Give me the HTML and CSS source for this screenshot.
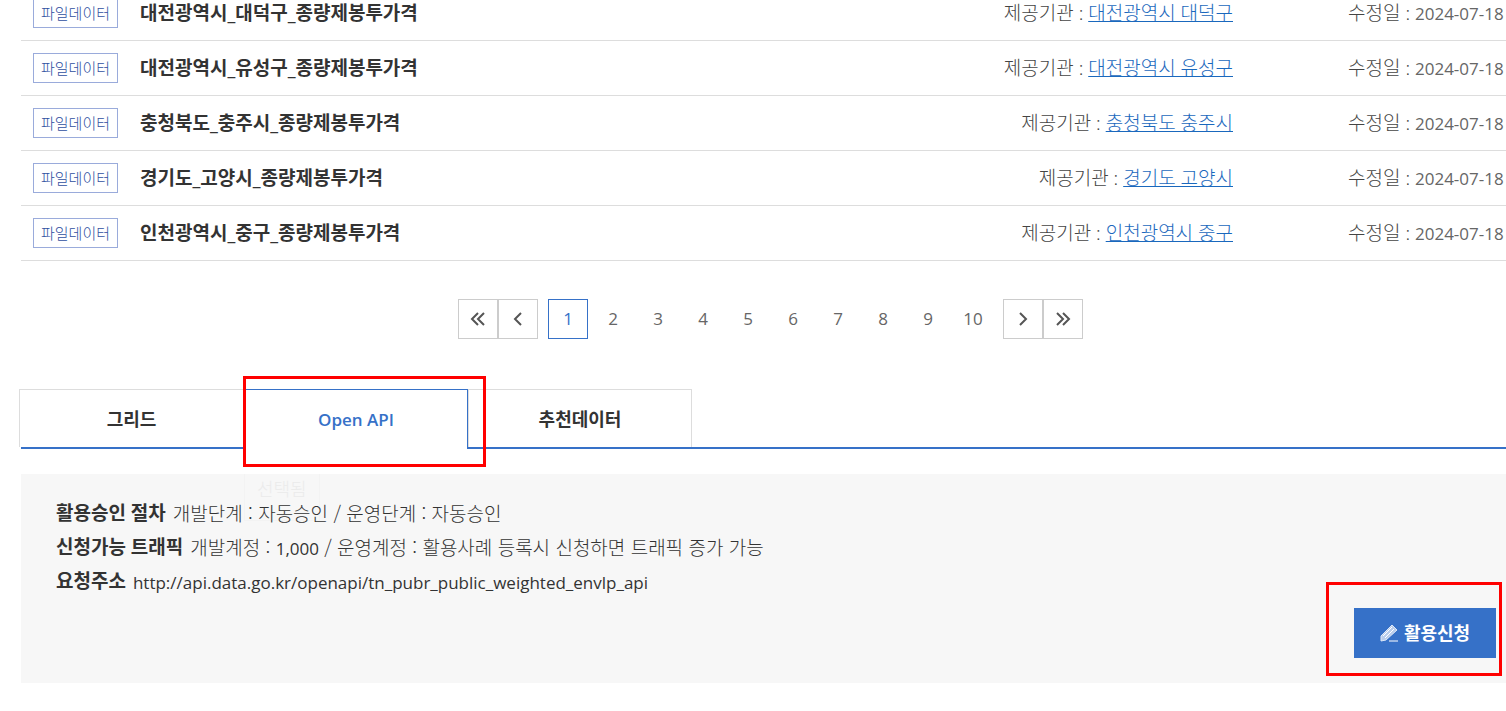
FILE: index.html
```html
<!DOCTYPE html>
<html lang="ko">
<head>
<meta charset="utf-8">
<title>공공데이터 목록</title>
<link rel="stylesheet" href="styles.css">
</head>
<body>
<main class="page">
  <ul class="list">
    <li class="row"><span class="badge">파일데이터</span><strong class="title">대전광역시_대덕구_종량제봉투가격</strong><span class="org">제공기관 : <a href="#">대전광역시 대덕구</a></span><span class="date">수정일 : <time class="latin">2024-07-18</time></span></li>
    <li class="row"><span class="badge">파일데이터</span><strong class="title">대전광역시_유성구_종량제봉투가격</strong><span class="org">제공기관 : <a href="#">대전광역시 유성구</a></span><span class="date">수정일 : <time class="latin">2024-07-18</time></span></li>
    <li class="row"><span class="badge">파일데이터</span><strong class="title">충청북도_충주시_종량제봉투가격</strong><span class="org">제공기관 : <a href="#">충청북도 충주시</a></span><span class="date">수정일 : <time class="latin">2024-07-18</time></span></li>
    <li class="row"><span class="badge">파일데이터</span><strong class="title">경기도_고양시_종량제봉투가격</strong><span class="org">제공기관 : <a href="#">경기도 고양시</a></span><span class="date">수정일 : <time class="latin">2024-07-18</time></span></li>
    <li class="row"><span class="badge">파일데이터</span><strong class="title">인천광역시_중구_종량제봉투가격</strong><span class="org">제공기관 : <a href="#">인천광역시 중구</a></span><span class="date">수정일 : <time class="latin">2024-07-18</time></span></li>
  </ul>

  <nav class="pager" aria-label="페이지">
    <div class="steps">
      <button class="step" type="button" aria-label="처음"><svg width="16" height="16" viewBox="0 0 16 16"><path d="M8 2 2 8l6 6M14 2 8 8l6 6"/></svg></button>
      <button class="step" type="button" aria-label="이전"><svg width="16" height="16" viewBox="0 0 16 16"><path d="M11 2 5 8l6 6"/></svg></button>
    </div>
    <div class="numbers">
      <a class="num current" href="#" aria-current="page">1</a>
      <a class="num" href="#">2</a>
      <a class="num" href="#">3</a>
      <a class="num" href="#">4</a>
      <a class="num" href="#">5</a>
      <a class="num" href="#">6</a>
      <a class="num" href="#">7</a>
      <a class="num" href="#">8</a>
      <a class="num" href="#">9</a>
      <a class="num" href="#">10</a>
    </div>
    <div class="steps">
      <button class="step" type="button" aria-label="다음"><svg width="16" height="16" viewBox="0 0 16 16"><path d="m5 2 6 6-6 6"/></svg></button>
      <button class="step" type="button" aria-label="마지막"><svg width="16" height="16" viewBox="0 0 16 16"><path d="m2 2 6 6-6 6M8 2l6 6-6 6"/></svg></button>
    </div>
  </nav>

  <div class="tabs">
    <div class="tab-slot"><button class="tab" type="button">그리드</button></div>
    <div class="tab-slot"><button class="tab active" type="button">Open API</button><span class="mark mark-tab"></span><span class="hint">선택됨</span></div>
    <div class="tab-slot"><button class="tab" type="button">추천데이터</button></div>
  </div>

  <section class="panel">
    <dl class="info">
      <div class="line"><dt>활용승인 절차</dt><dd>개발단계 : 자동승인 / 운영단계 : 자동승인</dd></div>
      <div class="line"><dt>신청가능 트래픽</dt><dd>개발계정 : <span class="latin">1,000</span> / 운영계정 : 활용사례 등록시 신청하면 트래픽 증가 가능</dd></div>
      <div class="line"><dt>요청주소</dt><dd><span class="latin">http://api.data.go.kr/openapi/tn_pubr_public_weighted_envlp_api</span></dd></div>
    </dl>
    <div class="action">
      <button class="apply" type="button"><svg width="18" height="18" viewBox="0 0 18 18"><path class="pen" d="M1 12 12 1l5 5L6 16l-5 1z"/><path class="lines" d="m3 12 9-9M5 14l9-9M9 17h9"/></svg>활용신청</button>
      <span class="mark mark-apply"></span>
    </div>
  </section>
</main>
</body>
</html>
```
FILE: styles.css
```css
* {
  box-sizing: border-box;
}

body {
  margin: 0;
  overflow: hidden;
  background: #fff;
  color: #333;
  font: 300 19px/34px "Noto Sans", "Noto Sans CJK KR", sans-serif;
}

button {
  padding: 0;
  font: inherit;
}

.latin {
  font-family: "Open Sans", sans-serif;
  font-size: 17px;
  font-weight: 400;
}

.page {
  margin-top: -14px;
  padding-left: 21px;
}

.list {
  margin: 0;
  padding: 0;
  list-style: none;
}

.row {
  display: flex;
  align-items: center;
  height: 55px;
  padding-left: 12px;
  border-bottom: 1px solid #ddd;
  white-space: nowrap;
}

.badge {
  width: 85px;
  border: 1px solid #9aabdb;
  color: #2f4f9f;
  font-size: 15px;
  line-height: 28px;
  text-align: center;
}

.title {
  flex: 1;
  margin-left: 22px;
  font-weight: 700;
}

.org,
.date {
  color: #444;
}

.org a {
  color: #1a68bd;
}

.date {
  width: 158px;
  margin-left: 115px;
}

.date .latin {
  color: #666;
}

.pager {
  display: flex;
  justify-content: center;
  gap: 10px;
  margin-top: 38px;
  padding-left: 14px;
}

.steps,
.numbers {
  display: flex;
}

.numbers {
  gap: 5px;
}

.step {
  display: flex;
  align-items: center;
  justify-content: center;
  width: 40px;
  height: 40px;
  border: 1px solid #ccc;
  background: #fff;
}

.step svg {
  fill: none;
  stroke: #555;
  stroke-width: 2;
}

.num {
  width: 40px;
  height: 40px;
  color: #666;
  font-family: "Open Sans", sans-serif;
  font-size: 17px;
  font-weight: 400;
  line-height: 40px;
  text-align: center;
  text-decoration: none;
}

.num.current {
  border: 1px solid #3671c8;
  color: #3671c8;
  line-height: 38px;
}

.tabs {
  display: flex;
  height: 60px;
  margin-top: 50px;
  margin-left: -2px;
  background: linear-gradient(#3671c8, #3671c8) 2px 100% / 100% 2px no-repeat;
}

.tab-slot {
  position: relative;
  width: 224px;
}

.tab-slot:first-child {
  width: 225px;
}

.tab {
  width: 100%;
  height: 58px;
  border: 1px solid #ddd;
  border-bottom: 0;
  background: #fff;
  color: #333;
  font-size: 18px;
  font-weight: 700;
}

.tab.active {
  height: 60px;
  border-color: #3671c8;
  color: #3671c8;
  font-family: "Open Sans", sans-serif;
  font-size: 17px;
  font-weight: 600;
}

.mark {
  position: absolute;
  z-index: 1;
  border: 3px solid #f00;
  pointer-events: none;
}

.mark-tab {
  top: -13px;
  left: -1px;
  width: 243px;
  height: 91px;
}

.hint {
  position: absolute;
  top: 85px;
  left: 0;
  width: 76px;
  padding: 0 12px 16px;
  border: 1px solid #f3f3f3;
  border-top: 0;
  color: #ebebeb;
  font-size: 18px;
  line-height: 30px;
  white-space: nowrap;
}

.panel {
  margin-top: 25px;
  padding: 22px 10px 25px 35px;
  background: #f7f7f7;
}

.info {
  position: relative;
  margin: 0;
}

.line {
  display: flex;
  gap: 7px;
  height: 34px;
}

.line dt {
  font-weight: 700;
}

.line dd {
  margin: 0;
  font-family: "Noto Sans CJK KR", sans-serif;
}

.action {
  position: relative;
  width: 142px;
  margin: 10px 0 0 auto;
}

.apply {
  display: flex;
  align-items: center;
  justify-content: center;
  gap: 6px;
  width: 100%;
  height: 50px;
  border: 0;
  background: #3671c8;
  color: #fff;
  font-size: 18px;
  font-weight: 700;
}

.pen {
  fill: #b9cdec;
  stroke: #dce7f7;
}

.lines {
  fill: none;
  stroke: #fff;
}

.mark-apply {
  top: -26px;
  right: -6px;
  bottom: -18px;
  left: -28px;
}
```
